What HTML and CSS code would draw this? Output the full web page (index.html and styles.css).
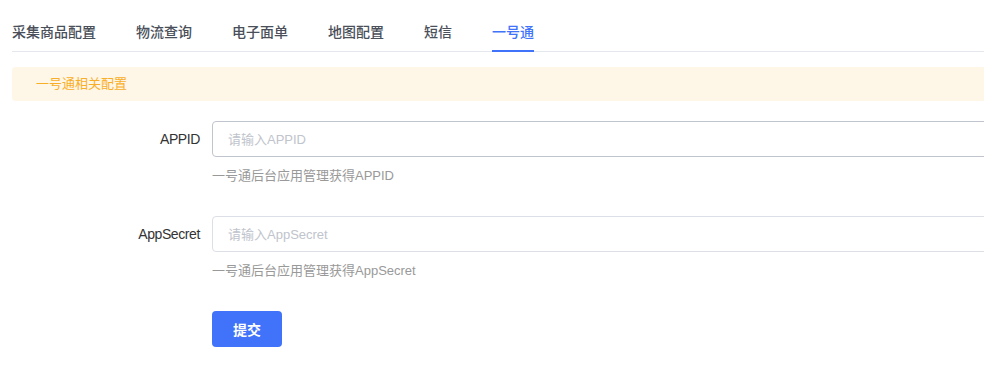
FILE: index.html
```html
<!DOCTYPE html>
<html lang="zh-CN">
<head>
  <meta charset="UTF-8" />
  <meta name="viewport" content="width=device-width, initial-scale=1.0"/>
  <title>一号通配置</title>
  <link rel="stylesheet" href="styles.css">
</head>
<body>
  <div class="page">
    <div class="tabs">
      <div class="tab">采集商品配置</div>
      <div class="tab">物流查询</div>
      <div class="tab">电子面单</div>
      <div class="tab">地图配置</div>
      <div class="tab">短信</div>
      <div class="tab active">一号通</div>
    </div>

    <div class="alert">一号通相关配置</div>

    <form class="form" onsubmit="return false">
      <div class="form-item">
        <label class="form-label" for="appid">APPID</label>
        <div class="form-content">
          <input class="input hover" id="appid" type="text" placeholder="请输入APPID" />
          <div class="help">一号通后台应用管理获得APPID</div>
        </div>
      </div>
      <div class="form-item">
        <label class="form-label" for="secret">AppSecret</label>
        <div class="form-content">
          <input class="input" id="secret" type="text" placeholder="请输入AppSecret" />
          <div class="help">一号通后台应用管理获得AppSecret</div>
        </div>
      </div>
      <div class="form-item">
        <div class="form-label"></div>
        <div class="form-content">
          <button class="btn-primary" type="submit">提交</button>
        </div>
      </div>
    </form>
  </div>
</body>
</html>
```

FILE: styles.css
```css
* {
  margin: 0;
  padding: 0;
  box-sizing: border-box;
  font-family: 'Liberation Sans', 'Noto Sans CJK SC', sans-serif;
}
body {
  background: #ffffff;
  overflow: hidden;
  padding: 12px;
}
.page {
  width: 1200px;
}
.tabs {
  display: flex;
  height: 40px;
  border-bottom: 1px solid #e4e7ed;
}
.tab {
  padding: 0 20px;
  line-height: 41px;
  font-size: 14px;
  font-weight: 500;
  color: #4a4f5a;
  position: relative;
}
.tab:first-child {
  padding-left: 0;
}
.tab.active {
  color: #4073fa;
}
.tab.active::after {
  content: '';
  position: absolute;
  left: 20px;
  right: 20px;
  bottom: -1px;
  height: 2px;
  background: #4073fa;
}
.alert {
  margin-top: 15px;
  height: 34px;
  line-height: 34px;
  padding: 0 24px;
  background: #fef6e6;
  color: #f9ae28;
  font-size: 13px;
  border-radius: 4px;
}
.form {
  margin-top: 20px;
}
.form-item {
  display: flex;
  margin-bottom: 30px;
}
.form-label {
  width: 200px;
  flex-shrink: 0;
  padding-right: 12px;
  text-align: right;
  line-height: 36px;
  font-size: 14px;
  letter-spacing: -0.4px;
  color: #333333;
}
.form-content {
  flex: 1;
}
.input {
  display: block;
  width: 100%;
  height: 36px;
  padding: 0 15px;
  border: 1px solid #dcdfe6;
  border-radius: 4px;
  font-size: 13px;
  color: #606266;
  outline: none;
}
.input.hover {
  border-color: #c0c4cc;
}
.input::placeholder {
  color: #c0c4cc;
}
.help {
  padding-top: 9px;
  line-height: 20px;
  font-size: 13px;
  color: #999999;
}
.btn-primary {
  width: 70px;
  height: 36px;
  border: none;
  border-radius: 4px;
  background: #4073fa;
  color: #ffffff;
  font-size: 14px;
  font-weight: 600;
  cursor: pointer;
}
```
